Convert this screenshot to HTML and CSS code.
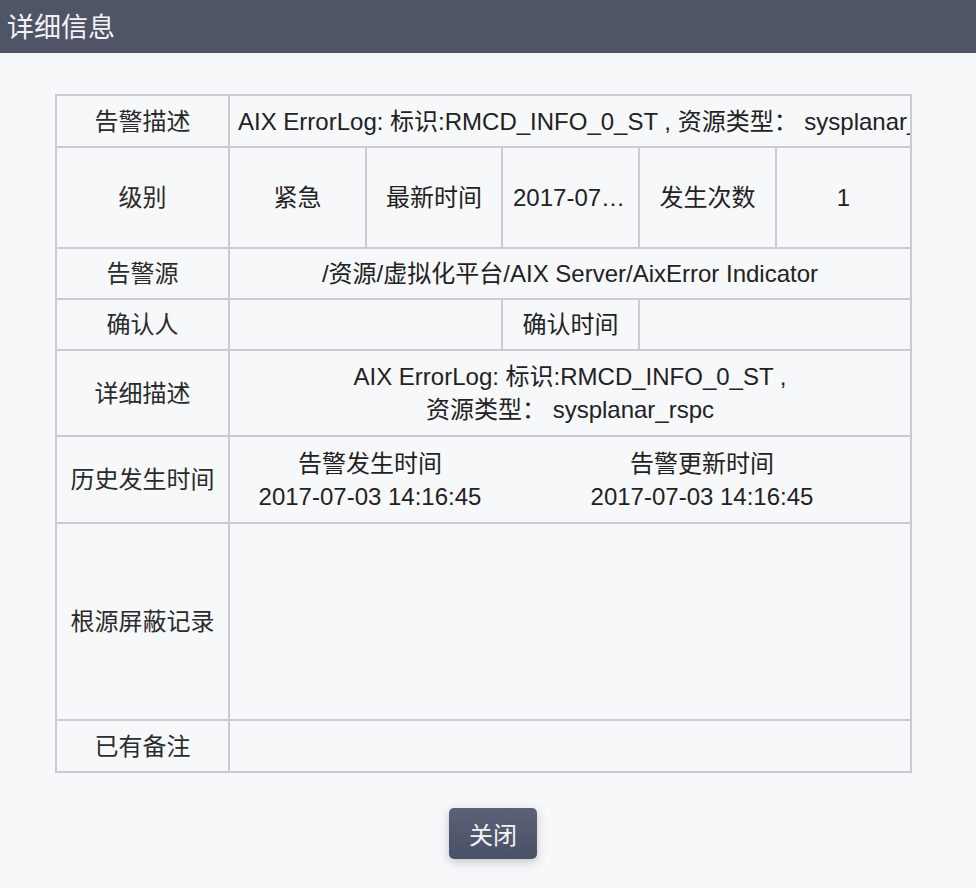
FILE: index.html
```html
<!DOCTYPE html>
<html lang="zh-CN">
<head>
<meta charset="utf-8">
<title>详细信息</title>
<link rel="stylesheet" href="styles.css">
</head>
<body>
<div class="header"><span class="title">详细信息</span></div>
<div class="content">
  <table class="detail">
    <colgroup>
      <col class="c-label">
      <col class="c-a">
      <col class="c-b">
      <col class="c-c">
      <col class="c-d">
      <col class="c-e">
    </colgroup>
    <tr class="r1">
      <td class="label">告警描述</td>
      <td colspan="5" class="clip">AIX ErrorLog: 标识:RMCD_INFO_0_ST , 资源类型： sysplanar_rspc</td>
    </tr>
    <tr class="r2">
      <td class="label">级别</td>
      <td>紧急</td>
      <td>最新时间</td>
      <td class="ellip">2017-07-03 14:16:45</td>
      <td>发生次数</td>
      <td>1</td>
    </tr>
    <tr class="r3">
      <td class="label">告警源</td>
      <td colspan="5">/资源/虚拟化平台/AIX Server/AixError Indicator</td>
    </tr>
    <tr class="r4">
      <td class="label">确认人</td>
      <td colspan="2"></td>
      <td>确认时间</td>
      <td colspan="2"></td>
    </tr>
    <tr class="r5">
      <td class="label">详细描述</td>
      <td colspan="5" class="multi">AIX ErrorLog: 标识:RMCD_INFO_0_ST ,<br>资源类型： sysplanar_rspc</td>
    </tr>
    <tr class="r6">
      <td class="label">历史发生时间</td>
      <td colspan="5" class="history">
        <div class="hist-grid">
          <div class="hist-col"><div>告警发生时间</div><div>2017-07-03 14:16:45</div></div>
          <div class="hist-col"><div>告警更新时间</div><div>2017-07-03 14:16:45</div></div>
        </div>
      </td>
    </tr>
    <tr class="r7">
      <td class="label">根源屏蔽记录</td>
      <td colspan="5"></td>
    </tr>
    <tr class="r8">
      <td class="label">已有备注</td>
      <td colspan="5"></td>
    </tr>
  </table>
  <div class="footer">
    <button class="btn-close" type="button">关闭</button>
  </div>
</div>
</body>
</html>
```
FILE: styles.css
```css
html, body {
  margin: 0;
  padding: 0;
}
body {
  background: #f7f8fa;
  font-family: "Liberation Sans", "Noto Sans CJK SC", sans-serif;
  color: #222;
  width: 976px;
  height: 888px;
  overflow: hidden;
}
.header {
  height: 53px;
  background: #4f5467;
  display: flex;
  align-items: center;
  padding-left: 7px;
}
.title {
  color: #f2f3f5;
  font-size: 27px;
  line-height: 1;
  font-family: "Noto Sans CJK SC", sans-serif;
  margin-top: -3px;
}
.content {
  padding-top: 41px;
}
.detail {
  margin-left: 55px;
  width: 855px;
  border-collapse: collapse;
  table-layout: fixed;
  font-size: 24px;
  line-height: 33px;
}
.c-label { width: 173px; }
.c-a { width: 137px; }
.c-b { width: 136px; }
.c-c { width: 137px; }
.c-d { width: 137px; }
.c-e { width: 135px; }
.detail td {
  border: 2px solid #cbccd1;
  padding: 0 10px;
  text-align: center;
  vertical-align: middle;
  color: #222;
}
.detail td.label {
  color: #2b2b2b;
}
.r1 { height: 52px; }
.r2 { height: 101px; }
.r3 { height: 51px; }
.r4 { height: 51px; }
.r5 { height: 86px; }
.r6 { height: 87px; }
.r7 { height: 197px; }
.r8 { height: 52px; }
.detail td.clip {
  text-align: left;
  white-space: nowrap;
  overflow: hidden;
  padding-left: 8px;
  padding-right: 0;
}
.detail td.ellip {
  white-space: nowrap;
  overflow: hidden;
  text-overflow: ellipsis;
}
.detail td.multi {
  padding: 0 10px;
  white-space: nowrap;
}
.detail td.history {
  padding: 0 0 0 10px;
  text-align: left;
}
.hist-grid {
  display: grid;
  grid-template-columns: 260px 260px;
  column-gap: 72px;
}
.hist-col {
  text-align: center;
  white-space: nowrap;
}
.footer {
  display: flex;
  justify-content: center;
  padding-left: 10px;
  padding-top: 35px;
}
.btn-close {
  width: 88px;
  height: 51px;
  border: none;
  border-radius: 5px;
  background: linear-gradient(#5b6278, #4a5066);
  color: #f4f5f7;
  font-size: 24px;
  font-family: "Noto Sans CJK SC", sans-serif;
  box-shadow: 0 3px 10px rgba(40, 45, 60, 0.25);
  padding: 0;
}
```
